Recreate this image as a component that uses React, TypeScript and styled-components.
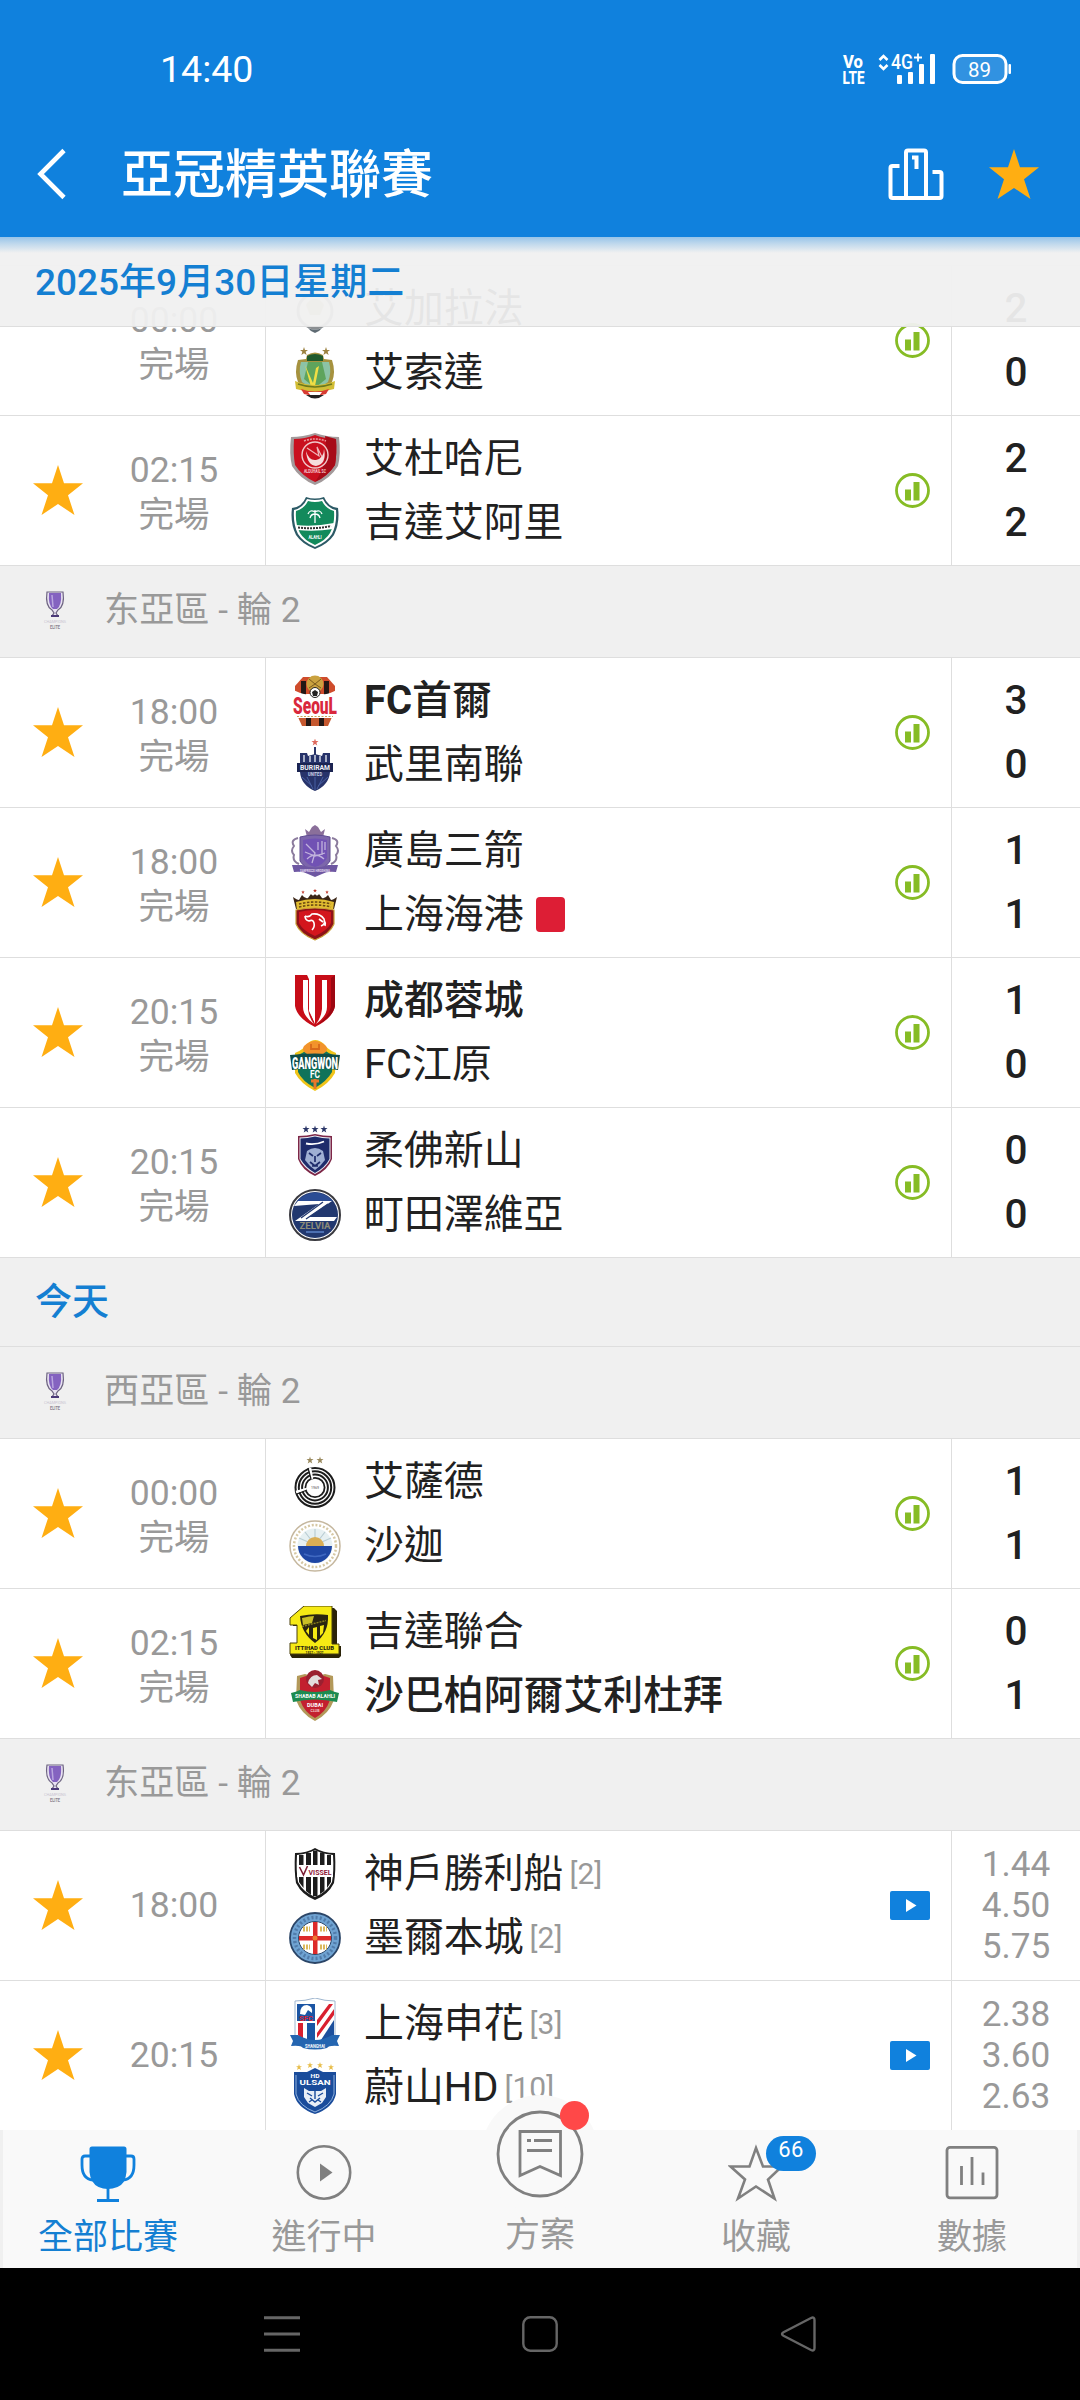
import React from "react";
import styled, { createGlobalStyle } from "styled-components";

type CrestName =
  | "gharafa"
  | "shorta"
  | "duhail"
  | "ahliSaudi"
  | "seoul"
  | "buriram"
  | "hiroshima"
  | "port"
  | "chengdu"
  | "gangwon"
  | "johor"
  | "machida"
  | "sadd"
  | "sharjah"
  | "ittihad"
  | "shabab"
  | "vissel"
  | "melbourne"
  | "shenhua"
  | "ulsan";

interface Team {
  name: string;
  crest: CrestName;
  winner?: boolean;
  rank?: number;
  redCard?: boolean;
}

interface Match {
  time: string;
  status?: string;
  favourite?: boolean;
  home: Team;
  away: Team;
  score?: [number, number];
  odds?: string[];
}

const colors = {
  primary: "#1081dd",
  dateText: "#147fd2",
  text: "#212121",
  muted: "#999999",
  line: "#dedede",
  header: "#f0f0f0",
  nav: "#f9f9f9",
  star: "#ffae12",
  green: "#86bc25",
  icon: "#808080",
};

const GlobalStyle = createGlobalStyle`
  * {
    box-sizing: border-box;
  }

  body {
    margin: 0;
    background: #fff;
    font-family: Roboto, "Noto Sans CJK TC", sans-serif;
    color: ${colors.text};
  }

  svg {
    display: block;
    flex-shrink: 0;
  }
`;

const Screen = styled.div`
  width: 1080px;
  height: 2400px;
  display: flex;
  flex-direction: column;
  overflow: hidden;
`;

const TopArea = styled.header`
  height: 237px;
  flex-shrink: 0;
  background: ${colors.primary};
  color: #fff;
`;

const StatusBar = styled.div`
  height: 137px;
  padding: 0 66px 0 160px;
  display: flex;
  align-items: center;
  justify-content: space-between;
  font-size: 37.5px;
`;

const TitleBar = styled.div`
  height: 74px;
  padding: 0 41px 0 36px;
  display: flex;
  align-items: center;
`;

const Title = styled.h1`
  flex: 1;
  margin: 0 0 0 53px;
  padding-top: 4px;
  font-size: 52px;
  line-height: 74px;
  font-weight: 500;
`;

const TitleActions = styled.div`
  display: flex;
  align-items: center;
  gap: 45px;
`;

const ListArea = styled.main`
  position: relative;
  flex: 1;
  min-height: 0;
  overflow: hidden;
`;

const StickyDate = styled.div`
  position: absolute;
  top: 0;
  left: 0;
  right: 0;
  height: 90px;
  padding-left: 35px;
  border-bottom: 1px solid ${colors.line};
  background: linear-gradient(
      rgba(16, 129, 221, 0.4),
      rgba(16, 129, 221, 0.24) 6px,
      rgba(16, 129, 221, 0) 16px
    ),
    rgba(240, 240, 240, 0.95);
  font-size: 37px;
  line-height: 91px;
  font-weight: 500;
  color: ${colors.dateText};
`;

const DateHeader = styled.div`
  height: 89px;
  padding-left: 35px;
  border-bottom: 1px solid ${colors.line};
  background: ${colors.header};
  font-size: 37px;
  line-height: 90px;
  font-weight: 500;
  color: ${colors.dateText};
`;

const LeagueHeader = styled.div<{ $height?: number }>`
  height: ${(props) => props.$height ?? 92}px;
  padding: 0 0 4px 35px;
  display: flex;
  align-items: center;
  gap: 29px;
  border-bottom: 1px solid ${colors.line};
  background: ${colors.header};
  font-size: 35.2px;
  line-height: 50px;
  color: ${colors.muted};
`;

const MatchRow = styled.div`
  height: 150px;
  display: grid;
  grid-template-columns: 265px 1fr 128px;
  border-bottom: 1px solid ${colors.line};
  background: #fff;
`;

const InfoCell = styled.div`
  display: grid;
  grid-template-columns: 50px 1fr;
  align-items: center;
  padding: 0 0 2px 33px;
`;

const TimeBlock = styled.div<{ $finished: boolean }>`
  display: flex;
  flex-direction: column;
  align-items: center;
  padding-top: ${(props) => (props.$finished ? 7 : 2)}px;
  font-size: 35.5px;
  line-height: 45px;
  color: ${colors.muted};
`;

const TeamsCell = styled.div`
  display: flex;
  align-items: center;
  padding: 0 21px 0 23px;
  border-left: 1px solid ${colors.line};
  border-right: 1px solid ${colors.line};
`;

const Teams = styled.div`
  flex: 1;
  display: flex;
  flex-direction: column;
  gap: 12px;
`;

const TeamLine = styled.div`
  height: 52px;
  display: flex;
  align-items: center;
`;

const TeamName = styled.span<{ $winner?: boolean }>`
  margin-left: 23px;
  padding-top: 1px;
  font-size: 39.9px;
  line-height: 52px;
  font-weight: ${(props) => (props.$winner ? 500 : 400)};
  white-space: nowrap;

  b {
    font-weight: ${(props) => (props.$winner ? 700 : 400)};
  }
`;

const Rank = styled.span`
  margin-left: 6px;
  font-size: 30px;
  color: ${colors.muted};
`;

const RedCard = styled.i`
  width: 29px;
  height: 35px;
  margin-left: 12px;
  border-radius: 4px;
  background: #dd1e35;
`;

const ResultCell = styled.div`
  display: flex;
  flex-direction: column;
  align-items: center;
  justify-content: center;
`;

const Score = styled.span`
  margin-top: -1px;
  font-size: 40.5px;
  line-height: 65px;
  font-weight: 500;
`;

const Odd = styled.span`
  font-size: 35.2px;
  line-height: 41px;
  color: ${colors.muted};
`;

const BottomNav = styled.nav`
  position: relative;
  height: 138px;
  flex-shrink: 0;
  display: grid;
  grid-template-columns: repeat(5, 1fr);
  box-shadow: inset 3px 0 #f0f0f0, inset -3px 0 #f0f0f0;
  background: ${colors.nav};
`;

const NavItem = styled.div<{ $active?: boolean }>`
  position: relative;
  display: flex;
  flex-direction: column;
  align-items: center;
  padding-top: 14px;
  font-size: 35px;
  line-height: 50px;
  color: ${(props) => (props.$active ? "#147fd2" : colors.muted)};

  svg {
    margin-bottom: 11px;
  }
`;

/* The plan button sticks out above the bar, only its label is in flow */
const PlanItem = styled(NavItem)`
  padding-top: 81px;
`;

const PlanButton = styled.div`
  position: absolute;
  top: -35px;
  left: 50%;
  width: 118px;
  height: 118px;
  margin-left: -59px;
  border-radius: 50%;
  background: ${colors.nav};
`;

const RedDot = styled.i`
  position: absolute;
  top: 6px;
  left: 79px;
  width: 29px;
  height: 29px;
  border-radius: 50%;
  background: #ff4848;
`;

const Badge = styled.span`
  position: absolute;
  top: 6px;
  left: 118px;
  width: 50px;
  height: 35px;
  border-radius: 18px;
  background: ${colors.primary};
  font-size: 22px;
  line-height: 27px;
  letter-spacing: 0.5px;
  text-align: center;
  color: #fff;
`;

const SystemBar = styled.div`
  height: 132px;
  flex-shrink: 0;
  display: flex;
  align-items: center;
  justify-content: center;
  gap: 222px;
  background: #000;
`;

const STAR_POINTS =
  "25,0 31,18.2 50,18.2 35,30.2 41.5,50 25,39 8.5,50 15,30.2 0,18.2 19,18.2";

const FavStar = () => (
  <svg width="50" height="50" viewBox="0 0 50 50">
    <polygon points={STAR_POINTS} fill={colors.star} />
  </svg>
);

const MiniStar = ({ x, y, s = 6, c = "#a08a50" }: {
  x: number;
  y: number;
  s?: number;
  c?: string;
}) => (
  <polygon
    points={STAR_POINTS}
    fill={c}
    transform={`translate(${x - s / 2} ${y - s / 2}) scale(${s / 50})`}
  />
);

const label = (
  text: string,
  x: number,
  y: number,
  size: number,
  fill: string,
  width?: number,
  weight = 700
) => (
  <text
    x={x}
    y={y}
    fontSize={size}
    fill={fill}
    fontWeight={weight}
    textAnchor="middle"
    textLength={width}
    lengthAdjust="spacingAndGlyphs"
    fontFamily="Roboto, sans-serif"
  >
    {text}
  </text>
);

const crests: Record<CrestName, React.ReactNode> = {
  gharafa: (
    <>
      <circle cx="26" cy="28" r="17" fill="#f4efdf" stroke="#8b8f92" strokeWidth="3" />
      <path d="M17 22c4-8 14-8 18 0l-4 10H21z" fill="#c9b98a" />
      <path d="M19 45q7 3 14 0l-3 3-4 2-4-2z" fill="#5f6b73" />
    </>
  ),
  shorta: (
    <>
      <MiniStar x={15} y={4} s={8} c="#9c8240" />
      <MiniStar x={37} y={4} s={8} c="#9c8240" />
      <path d="M18 8q8-5 16 0l1 4 8 1q4 12 0 22l-8 10q-9 7-18 0L9 35q-4-10 0-22l8-1z" fill="#a6923f" />
      <path d="M18 9q8-4 16 0v5H18z" fill="#1f5a2c" />
      <path d="M12 15h28q3 10-1 20l-13 9-13-9q-4-10-1-20z" fill="#8cc3a6" />
      <path d="M19 15h14l4 17-11 9-11-9z" fill="#5ea45c" />
      <path d="M16 18l8 18 3-15 3-2-4 20-4 1z" fill="#f0de45" />
      <path d="M6 34q20 8 40 0l-1 8q-19 6-38 0z" fill="#d2bd35" />
      <path d="M9 37q17 6 34 0" stroke="#6c7a1d" strokeWidth="1.6" fill="none" />
      <path d="M12 42q14 5 28 0l-3 5q-11 3-22 0z" fill="#d83b32" />
      <path d="M19 45h14l-3 4h-8z" fill="#fff" />
      <path d="M17 48h18q-9 7-18 0z" fill="#222" />
    </>
  ),
  duhail: (
    <>
      <path d="M2 4q12 0 24-4 12 4 24 4 2 17-1 29-8 13-23 19Q11 46 3 33 0 21 2 4z" fill="#a39a9b" />
      <path d="M5 6q11 0 21-4 10 4 21 4 1 15-1 26-7 11-20 17Q13 43 6 32 4 21 5 6z" fill="#c9101f" />
      <path d="M36 3l11 3q1 15-1 26-7 11-20 17 14-19 10-46z" fill="#a70b18" />
      <circle cx="26" cy="22" r="13" fill="none" stroke="#f1c9cb" strokeWidth="1.4" />
      <path d="M17 18q3 10 10 9 8-2 8-11 3 15-8 17-9-1-10-15z" fill="#f5dcdc" />
      <path d="M18 15l12 8-2-9 5 10" stroke="#f0b7ba" strokeWidth="1.2" fill="none" />
      <path d="M15 8q11-4 22 0" stroke="#e8969c" strokeWidth="1.6" fill="none" strokeDasharray="2 1" />
      {label("ALDUHAIL SC", 26, 40, 5, "#f5cdd0", 22)}
    </>
  ),
  ahliSaudi: (
    <>
      <path d="M17 0q9 3 18 0 4 10 14 11 2 15-4 27-6 9-19 14Q13 47 7 38 1 26 3 11 13 10 17 0z" fill="#2c5a66" />
      <path d="M18 2q8 2 16 0 4 9 13 11 1 14-4 24-5 8-17 13Q14 45 9 37 4 27 5 13q9-2 13-11z" fill="#fff" />
      <path d="M19 4q7 2 14 0 4 8 12 10 1 13-4 22-4 7-15 12-11-5-15-12-5-9-4-22 8-2 12-10z" fill="#128a5c" />
      <path d="M26 13v13M26 15q-5-3-7 2M26 15q5-3 7 2M26 17q-4 0-5 4M26 17q4 0 5 4" stroke="#fff" strokeWidth="1.3" fill="none" />
      <path d="M7 28q18 2 38-2l-1 6q-18 3-36 1z" fill="#fff" />
      <path d="M9 30.500q17 2 33-1.500" stroke="#333" strokeWidth="2" strokeDasharray="2 1" fill="none" />
      {label("ALAHLI", 26, 42, 6, "#fff", 13)}
    </>
  ),
  seoul: (
    <>
      <path d="M14 2h24l8 9v10H6V11z" fill="#cf4c2c" />
      <path d="M12 6h5v14h-5zM35 6h5v14h-5z" fill="#231815" />
      <circle cx="26" cy="9" r="8.500" fill="#caa23f" />
      <path d="M20 4l6 5 6-5M20 13l6-4 6 4" stroke="#7a5a1c" fill="none" />
      <path d="M9 42h34l-4 9H13z" fill="#c5582f" />
      <path d="M17 43h5v8h-5zM30 43h5v8h-5z" fill="#231815" />
      <path d="M3 14q10 6 15 5h16q6 1 15-5v29H3z" fill="#fff" />
      <circle cx="26" cy="17.500" r="5" fill="#fff" stroke="#222" strokeWidth="1" />
      <path d="M26 15l3 2-1 4h-4l-1-4z" fill="#222" />
      {label("SeouL", 26, 39, 24, "#d9283c", 44, 900)}
      <path d="M8 41.500h36" stroke="#c9a458" strokeWidth="1.2" strokeDasharray="2 1.500" />
    </>
  ),
  buriram: (
    <>
      <MiniStar x={26} y={3} s={7} c="#df6a5d" />
      <path d="M26 8v9" stroke="#2a3568" strokeWidth="2" />
      <path d="M11 14h7l1 3 7-2 7 2 1-3h7v11h2v8h-2q-1 13-15 19Q12 46 11 33H9v-8h2z" fill="#27336a" />
      <path d="M15 16v7M21 17v6M26 16v7M31 17v6M37 16v7" stroke="#c9cede" strokeWidth="1.600" />
      <path d="M13 38l10 9M18 38l6 12M26 38v13M34 38l-6 12M39 38l-10 9" stroke="#4960a3" strokeWidth="1" />
      <path d="M8 24h36v9H8z" fill="#1b2452" />
      {label("BURIRAM", 26, 31, 7.500, "#eef0f7", 30)}
      {label("UNITED", 26, 37, 4.5, "#ccd3e8", 14)}
    </>
  ),
  hiroshima: (
    <>
      <path d="M16 4l4 3 3-5 3-2 3 2 3 5 4-3-2 8H18z" fill="#8a6f9a" />
      <path d="M11 12q15-4 30 0v24q-5 8-15 10-10-2-15-10z" fill="#7c66ab" stroke="#5e4b91" strokeWidth="1" />
      <path d="M14 15q12-3 24 0v18q-4 7-12 9-8-2-12-9z" fill="#7152b4" />
      <path d="M17 19l9 9-3 10M33 16v14M29 17v8M36 17v8M18 34q8-8 17 0M16 27l10 4 10-3" stroke="#c1b3dc" strokeWidth="1.3" fill="none" />
      <path d="M9 13q-8 2-4 8-4 5 0 9-2 6 5 9M43 13q8 2 4 8 4 5 0 9 2 6-5 9" stroke="#8b7b9d" strokeWidth="2" fill="none" />
      <path d="M3 40h10q13 5 26 0h10l-2 7q-9-1-14 2l-7 3-7-3q-5-3-14-2z" fill="#6e57a2" />
      {label("SANFRECCE HIROSHIMA", 26, 46.500, 4, "#e6def1", 30)}
    </>
  ),
  port: (
    <>
      <path d="M4 8q4 3 6 3l3-5q3 4 6 3l3-4q2 3 4 0 2 3 4 0l3 4q3 1 6-3l3 5q2 0 6-3l-3 12H7z" fill="#3a2415" />
      <MiniStar x={26} y={1.500} s={4} c="#c0392b" />
      <MiniStar x={14} y={3} s={3.500} c="#c0392b" />
      <MiniStar x={38} y={3} s={3.500} c="#c0392b" />
      <path d="M7 13q19-6 38 0l-1 9H8z" fill="#e2bd31" />
      <path d="M10 15q16-4 32 0M10 18q16-4 32 0" stroke="#6b4a12" strokeWidth="1.600" strokeDasharray="2.500 1.500" fill="none" />
      <path d="M7 21q19-4 38 0v14q-4 10-19 16Q11 45 7 35z" fill="#8e1219" stroke="#c9a13a" strokeWidth="1.200" />
      <path d="M10 23q16-4 32 0v11q-4 8-16 13-12-5-16-13z" fill="#d3151d" />
      <path d="M16 27q4 2 7-2 8-1 12 5 2 5-3 7M16 27q0 4 4 5 4-2 5 2 1 4-2 7M30 30l4 3M35 31q2 3 1 6" stroke="#fff" strokeWidth="1.600" fill="none" />
    </>
  ),
  chengdu: (
    <>
      <path d="M6 0h12l2 4v32l6 12V0h20v31q-2 12-20 21Q8 43 6 31z" fill="#c70d18" />
      <path d="M14 5h5v29q1 9 6 15-11-8-11-17zM33 5h5v27q0 9-11 17 5-6 6-15z" fill="#fff" />
      <path d="M19 0h2v36l5 13V38L20 4z" fill="#fff" />
      <path d="M42 3v29q-2 9-14 18 16-8 18-19V0z" fill="#9d0712" />
    </>
  ),
  gangwon: (
    <>
      <path d="M6 14q8-3 12-9 8-8 17 0 4 6 12 9l-1 20q-6 11-20 18Q12 45 6 34z" fill="#f0c419" />
      <path d="M9 16q8-3 12-9h11q4 6 12 9l-1 17q-5 9-17 16Q13 42 9 33z" fill="#10735a" />
      <path d="M15 7q11-10 22 0 3 5-3 8H18q-6-3-3-8z" fill="#f2932c" />
      <path d="M22 5v5h8V5" stroke="#d8691a" strokeWidth="1.800" fill="none" />
      <path d="M1 16q25-3 50 0l-2 15q-23-4-46 0z" fill="#0f4d49" />
      {label("GANGWON", 26, 30, 16.500, "#fff", 46, 900)}
      {label("FC", 26, 38.500, 10, "#fff", 10)}
      <path d="M26 40v10M22 42h8" stroke="#e9772a" strokeWidth="3" />
    </>
  ),
  johor: (
    <>
      <MiniStar x={17} y={4} s={7} c="#2a3567" />
      <MiniStar x={26} y={4} s={7} c="#2a3567" />
      <MiniStar x={35} y={4} s={7} c="#2a3567" />
      <path d="M9 11q9 0 17-2 8 2 17 2v23q-4 11-17 17Q13 45 9 34z" fill="#7d2747" />
      <path d="M10.500 12.500q8 0 15.500-2 7.500 2 15.500 2V34q-4 9-15.500 15Q14.500 43 10.500 34z" fill="#e9ebf3" />
      <path d="M11.500 13.500q7 0 14.500-2 7 2 14.500 2V34q-4 8-14.500 14-10-6-14.500-14z" fill="#1e2c6b" />
      <path d="M17 18.500q9 2 18-2" stroke="#fff" strokeWidth="1.800" fill="none" />
      <path d="M18 26q8-6 16 0l2 9-5 6-5 4-5-4-5-6z" fill="#9fafd3" />
      <path d="M20 28l4 3M32 28l-4 3M26 31v6M21 37l5 4 5-4M23 41h6" stroke="#1e2c6b" strokeWidth="1.700" fill="none" />
    </>
  ),
  machida: (
    <>
      <circle cx="26" cy="26" r="25" fill="#fff" stroke="#3a3a40" strokeWidth="2" />
      <circle cx="26" cy="26" r="23" fill="#22386f" />
      <path d="M8 12q8-8 18-8.500 11 .5 18 8.500z" fill="#2b4c94" />
      <path d="M5 17l4-5h34l-23 16h28l-3 4H6l24-17z" fill="#fff" />
      <path d="M12 29l22-16M17 30l22-15" stroke="#22386f" strokeWidth="1.300" />
      {label("ZELVIA", 26, 40, 9, "#8d8b78", 31)}
      <path d="M17 43h18" stroke="#5c83c8" strokeWidth="1.500" />
    </>
  ),
  sadd: (
    <>
      <MiniStar x={21} y={4} s={7} c="#9a8a5e" />
      <MiniStar x={31} y={4} s={7} c="#9a8a5e" />
      <g fill="none" stroke="#1c1c1c">
        <circle cx="26" cy="31.500" r="19.500" strokeWidth="2" />
        <circle cx="26" cy="31.500" r="16.200" strokeWidth="2" />
        <circle cx="26" cy="31.500" r="12.900" strokeWidth="2" />
        <circle cx="26" cy="31.500" r="9.600" strokeWidth="1.800" />
      </g>
      <path d="M21 12l2 11M7 36l11-3" stroke="#fff" strokeWidth="2.500" />
      <path d="M19 12l3 11M8 38l10-4" stroke="#1c1c1c" strokeWidth="1.300" />
      {label("1969", 26, 33, 4, "#8a8a8a", 8)}
    </>
  ),
  sharjah: (
    <>
      <circle cx="26" cy="26" r="25" fill="#fff" stroke="#c5b79e" strokeWidth="1.500" />
      <circle cx="26" cy="26" r="21" fill="none" stroke="#d6c8a4" strokeWidth="2.500" strokeDasharray="2 1.800" />
      <circle cx="26" cy="26" r="17.500" fill="#e6f0f2" />
      <path d="M26 25V9M26 25L16 12M26 25l10-13M26 25L10 18M26 25l16-7" stroke="#b9cdd3" strokeWidth="1.200" />
      <path d="M17 26a9 9 0 0118 0z" fill="#d9ae55" />
      <path d="M9 26h34a17 17 0 01-34 0z" fill="#1f47a4" />
      <path d="M15 34q11 5 22 0" stroke="#3f68c0" strokeWidth="1.500" fill="none" />
    </>
  ),
  ittihad: (
    <>
      <path d="M4 14L17 2h28l3 3v35h4v10l-2 2H3l-2-3V38h7V20H4z" fill="#2b2308" />
      <path d="M1 12L15 0h28v38h7v10H1V37h7V19H1z" fill="#f6ea14" stroke="#4a400c" strokeWidth="1" />
      <path d="M11 10q14-3 28-1 1 18-13 28Q12 27 11 10z" fill="#2a2510" />
      <path d="M13 12q8-2 12-2l-2 7-9 2z" fill="#c9bf26" />
      <path d="M17 25l3 4v-8zM24 22l4-1v13l-4-2zM31 20l4-1-1 8-3 3z" fill="#f6ea14" />
      <path d="M13 20.500l24-6" stroke="#8a811d" strokeWidth="1.500" strokeDasharray="2 1" />
      {label("ITTIHAD CLUB", 25.500, 44, 5.500, "#2a2510", 39, 900)}
      {label("1927 - 1927", 25.500, 47.500, 3, "#2a2510", 18)}
    </>
  ),
  shabab: (
    <>
      <path d="M8 6l8-2 10 3 10-3 8 2 1 24q-5 14-19 21Q12 44 7 30z" fill="#b3995a" />
      <path d="M11 8l6-2 9 3 9-3 6 2v22q-4 12-15 18-11-6-15-18z" fill="#c3202f" />
      <circle cx="26" cy="9" r="9" fill="#9a2030" />
      <path d="M19 13q2-8 9-8l5 4-4 1 1 5-4-2-3 4z" fill="#e2dcdc" />
      <path d="M2 23q5-1 9-3 15 4 30 0 4 2 9 3l-2 9q-22-5-44 0z" fill="#1d8b50" />
      {label("SHABAB ALAHLI", 26, 28, 5.500, "#fff", 40)}
      {label("DUBAI", 26, 37, 6, "#fff", 16)}
      {label("CLUB", 26, 42, 4, "#f2c9cc", 9)}
    </>
  ),
  vissel: (
    <>
      <path d="M6 5q12 0 20-5 8 5 20 5 1 18-1 30-6 12-19 17Q13 47 7 35 5 23 6 5z" fill="#1c1c1c" />
      <path d="M8 7q11-1 18-5 7 4 18 5 1 16-1 27-5 10-17 15Q14 44 9 34 7 23 8 7z" fill="#fff" />
      <path d="M10 7h4.500v33L10 34zM17 5h5v42l-5-4zM24 2.500h4.500v46L24 48zM31 4.500h4.500V43L31 46zM38 7h4v27l-4 6z" fill="#1c1c1c" />
      <path d="M8 17h36v12H8z" fill="#fff" />
      <path d="M10.500 19l4 8 4-9" stroke="#7b1f35" strokeWidth="1.600" fill="none" />
      {label("VISSEL", 31, 26.500, 7.500, "#8f2038", 23)}
    </>
  ),
  melbourne: (
    <>
      <circle cx="26" cy="26" r="25" fill="#6fa3d2" stroke="#2b4567" strokeWidth="1.800" />
      <circle cx="26" cy="26" r="20.500" fill="none" stroke="#517cab" strokeWidth="3.500" strokeDasharray="2 2.200" />
      <circle cx="26" cy="26" r="16.500" fill="#fff" stroke="#2b4567" strokeWidth="1" />
      <path d="M14 17h7M31 17h7M14 35h7M31 35h7" stroke="#dcb95c" strokeWidth="5" strokeDasharray="2 1" />
      <path d="M24 10h4.500v32H24zM10 24h32v4.500H10z" fill="#dd2a2a" />
      <circle cx="26" cy="26" r="2.500" fill="#ee7c33" />
    </>
  ),
  shenhua: (
    <>
      <path d="M6 3q10 0 20-3 10 3 20 3v34q-6 7-20 10Q12 44 6 37z" fill="#fff" stroke="#9fb6cf" strokeWidth="1" />
      <path d="M8 6h18v17H8z" fill="#1b55a4" />
      <path d="M11 16q0-9 7-9 6 1 5 8l-4-3-3 5z" fill="#fff" />
      {label("SFC", 17, 23, 7, "#de1f2f", 14)}
      <path d="M28 22l12-16h4L28 28zM28 35l17-24v6L28 40z" fill="#d9202f" />
      <path d="M9 25h5v17l-5-5z" fill="#d9202f" />
      <path d="M18 25h8v21l-8-3z" fill="#1b55a4" />
      <path d="M45 22v15l-15 8z" fill="#1c4f9c" />
      <path d="M1 37h8q17 10 34 0h8l-3 6 2 5q-10-1-12 2-12 3-24 0-2-3-12-2l2-5z" fill="#2465b0" />
      {label("SHANGHAI", 26, 49.500, 5, "#fff", 20)}
    </>
  ),
  ulsan: (
    <>
      <MiniStar x={10} y={5} s={6} c="#e7bd4b" />
      <MiniStar x={21} y={3} s={6} c="#e7bd4b" />
      <MiniStar x={31} y={3} s={6} c="#e7bd4b" />
      <MiniStar x={42} y={5} s={6} c="#e7bd4b" />
      <path d="M5 10h13l8-4 8 4h13v22q-3 14-21 20Q8 46 5 32z" fill="#1a4c9b" />
      <path d="M7 13v19q3 12 19 18 16-6 19-18V13" stroke="#8fb1dd" strokeWidth="1" fill="none" />
      {label("HD", 26, 16, 6, "#fff", 9)}
      {label("ULSAN", 26, 23, 7.500, "#fff", 31)}
      <path d="M15 26l5 3h12l5-3v9l-4 6-7 4-7-4-4-6z" fill="#e8eef6" />
      <path d="M18 31l5 3M34 31l-5 3M26 29v8M21 36l5 4 5-4M20 40l3-2M32 40l-3-2" stroke="#1a4c9b" strokeWidth="1.400" fill="none" />
    </>
  ),
};

const Crest = ({ name }: { name: CrestName }) => (
  <svg width="52" height="52" viewBox="0 0 52 52">
    {crests[name]}
  </svg>
);

const CupLogo = () => (
  <svg width="40" height="40" viewBox="0 0 40 40">
    <path d="M12 2h16q2 14-5 18l-2 3 2 3h-6l2-3-2-3Q10 16 12 2z" fill="#e8e2f2" stroke="#6d6480" strokeWidth="1.200" />
    <path d="M14 3h12q1 12-4 16h-4q-5-4-4-16z" fill="#8463c0" />
    <path d="M17 5l1 12" stroke="#b9a6df" strokeWidth="1.500" />
    <path d="M16 25h8v2h-8z" fill="#4b3a78" />
    {label("CHAMPIONS", 20, 33, 4, "#c9c4d0", 22, 400)}
    {label("ELITE", 20, 39, 4.500, "#8a8490", 10)}
  </svg>
);

const StatsIcon = () => (
  <svg width="35" height="35" viewBox="0 0 35 35">
    <circle cx="17.500" cy="17.500" r="16" fill="none" stroke={colors.green} strokeWidth="2.800" />
    <path d="M10 16.500h6v11h-6zM18.500 9h6v18.500h-6z" fill={colors.green} />
  </svg>
);

const VideoIcon = () => (
  <svg width="40" height="29" viewBox="0 0 40 29">
    <rect width="40" height="29" rx="2" fill={colors.primary} />
    <path d="M16 8l10.500 6.500L16 21z" fill="#fff" />
  </svg>
);

const StatusIcons = () => (
  <svg width="178" height="40" viewBox="836 49 178 40" fill="#fff">
    {label("Vo", 853, 67.800, 18, "#fff", 20, 800)}
    {label("LTE", 853.500, 84, 18.500, "#fff", 22, 800)}
    <path d="M879.500 60l4-4 4 4M879.500 65l4 4 4-4" fill="none" stroke="#fff" strokeWidth="2.600" />
    {label("4G", 902, 69, 20.500, "#fff", 22, 500)}
    <path d="M918 53.500v8M914 57.500h8" stroke="#fff" strokeWidth="1.800" />
    <rect x="897" y="75" width="5" height="9" rx="1" />
    <rect x="908" y="72" width="5" height="12" rx="1" />
    <rect x="919" y="64" width="5" height="20" rx="1" />
    <rect x="930" y="54" width="5" height="30" rx="1" />
    <rect x="954" y="55.500" width="52" height="27" rx="8.500" fill="rgba(255,255,255,.14)" stroke="#fff" strokeWidth="3" />
    <rect x="1008.500" y="64" width="2.500" height="10" rx="1" />
    {label("89", 979.500, 76.500, 21, "#fff", 23, 400)}
  </svg>
);

const BackIcon = () => (
  <svg width="32" height="52" viewBox="0 0 32 52">
    <path d="M28 2.500L4.500 26l23.500 23.500" fill="none" stroke="#fff" strokeWidth="4.600" />
  </svg>
);

const PodiumIcon = () => (
  <svg width="56" height="52" viewBox="0 0 56 52" fill="none" stroke="#fff" strokeWidth="4">
    <path d="M11.500 18H4.500q-2 0-2 2v28q0 2 2 2h47q2 0 2-2V26q0-2-2-2h-7" />
    <path d="M18 50V4.500q0-2 2-2h16q2 0 2 2V50" />
    <path d="M24 9.500h4.500V21" />
  </svg>
);

const TrophyIcon = () => (
  <svg width="56" height="58" viewBox="0 0 56 58" fill="none" stroke={colors.primary} strokeWidth="2.800">
    <path d="M9.500 5Q9.500 2.400 12 2.400h32q2.500 0 2.500 2.600v23q-1 12-9 15-10 4-19 0-8-4-9-15z" fill={colors.primary} stroke="none" />
    <path d="M10 12H5q-3 0-3 3v6q0 14 11 15M46 12h5q3 0 3 3v6q0 14-11 15" />
    <path d="M28 44v12M17 56.500h22" />
  </svg>
);

const LiveIcon = () => (
  <svg width="56" height="58" viewBox="0 0 56 58">
    <circle cx="28" cy="28.500" r="26.200" fill="none" stroke={colors.icon} strokeWidth="2.600" />
    <path d="M24 19.500l12.500 9-12.500 9z" fill={colors.icon} />
  </svg>
);

const PlanIcon = () => (
  <svg width="118" height="118" viewBox="0 0 118 118" fill="none" stroke={colors.icon} strokeWidth="2.800">
    <circle cx="59" cy="59" r="42" />
    <path d="M39 36.500h40.500v44L59 71.500l-20 9z" />
    <path d="M46 45.500h4M53 45.500h18M46 55.500h25" />
  </svg>
);

const StarOutlineIcon = () => (
  <svg width="56" height="58" viewBox="0 0 56 58">
    <path d="M28 4l7 18.500h18.800L40 35.500 46.500 54.500 28 42.500 10 54.500 17 35.500 2.500 22.500h19z" fill="none" stroke={colors.icon} strokeWidth="2.600" />
  </svg>
);

const DataIcon = () => (
  <svg width="56" height="58" viewBox="0 0 56 58" fill="none" stroke={colors.icon} strokeWidth="2.800">
    <rect x="3" y="3.300" width="50" height="50.500" rx="3" />
    <path d="M17.500 22v19M28 13v28M39 28.500v12.500" />
  </svg>
);

const TeamRow = ({ team }: { team: Team }) => (
  <TeamLine>
    <Crest name={team.crest} />
    <TeamName $winner={team.winner}>
      {team.name
        .split(/([A-Z]+)/)
        .map((part, i) => (/[A-Z]/.test(part) ? <b key={i}>{part}</b> : part))}
    </TeamName>
    {team.rank && <Rank>[{team.rank}]</Rank>}
    {team.redCard && <RedCard />}
  </TeamLine>
);

const MatchItem = ({ match }: { match: Match }) => (
  <MatchRow>
    <InfoCell>
      {match.favourite === false ? <span /> : <FavStar />}
      <TimeBlock $finished={!!match.status}>
        <span>{match.time}</span>
        {match.status && <span>{match.status}</span>}
      </TimeBlock>
    </InfoCell>
    <TeamsCell>
      <Teams>
        <TeamRow team={match.home} />
        <TeamRow team={match.away} />
      </Teams>
      {match.odds ? <VideoIcon /> : <StatsIcon />}
    </TeamsCell>
    <ResultCell>
      {match.score?.map((goals, i) => (
        <Score key={i}>{goals}</Score>
      ))}
      {match.odds?.map((odd) => (
        <Odd key={odd}>{odd}</Odd>
      ))}
    </ResultCell>
  </MatchRow>
);

const MatchList = ({ matches }: { matches: Match[] }) => (
  <>
    {matches.map((match) => (
      <MatchItem key={match.home.crest} match={match} />
    ))}
  </>
);

const yesterdayWest: Match[] = [
  {
    time: "00:00",
    status: "完場",
    favourite: false,
    home: { name: "艾加拉法", crest: "gharafa" },
    away: { name: "艾索達", crest: "shorta" },
    score: [2, 0],
  },
  {
    time: "02:15",
    status: "完場",
    home: { name: "艾杜哈尼", crest: "duhail" },
    away: { name: "吉達艾阿里", crest: "ahliSaudi" },
    score: [2, 2],
  },
];

const yesterdayEast: Match[] = [
  {
    time: "18:00",
    status: "完場",
    home: { name: "FC首爾", crest: "seoul", winner: true },
    away: { name: "武里南聯", crest: "buriram" },
    score: [3, 0],
  },
  {
    time: "18:00",
    status: "完場",
    home: { name: "廣島三箭", crest: "hiroshima" },
    away: { name: "上海海港", crest: "port", redCard: true },
    score: [1, 1],
  },
  {
    time: "20:15",
    status: "完場",
    home: { name: "成都蓉城", crest: "chengdu", winner: true },
    away: { name: "FC江原", crest: "gangwon" },
    score: [1, 0],
  },
  {
    time: "20:15",
    status: "完場",
    home: { name: "柔佛新山", crest: "johor" },
    away: { name: "町田澤維亞", crest: "machida" },
    score: [0, 0],
  },
];

const todayWest: Match[] = [
  {
    time: "00:00",
    status: "完場",
    home: { name: "艾薩德", crest: "sadd" },
    away: { name: "沙迦", crest: "sharjah" },
    score: [1, 1],
  },
  {
    time: "02:15",
    status: "完場",
    home: { name: "吉達聯合", crest: "ittihad" },
    away: { name: "沙巴柏阿爾艾利杜拜", crest: "shabab", winner: true },
    score: [0, 1],
  },
];

const todayEast: Match[] = [
  {
    time: "18:00",
    home: { name: "神戶勝利船", crest: "vissel", rank: 2 },
    away: { name: "墨爾本城", crest: "melbourne", rank: 2 },
    odds: ["1.44", "4.50", "5.75"],
  },
  {
    time: "20:15",
    home: { name: "上海申花", crest: "shenhua", rank: 3 },
    away: { name: "蔚山HD", crest: "ulsan", rank: 10 },
    odds: ["2.38", "3.60", "2.63"],
  },
];

export default function App() {
  return (
    <>
      <GlobalStyle />
      <Screen>
        <TopArea>
          <StatusBar>
            <span>14:40</span>
            <StatusIcons />
          </StatusBar>
          <TitleBar>
            <BackIcon />
            <Title>亞冠精英聯賽</Title>
            <TitleActions>
              <PodiumIcon />
              <FavStar />
            </TitleActions>
          </TitleBar>
        </TopArea>

        <ListArea>
          <LeagueHeader $height={29} />
          <MatchList matches={yesterdayWest} />
          <LeagueHeader>
            <CupLogo />
            东亞區 - 輪 2
          </LeagueHeader>
          <MatchList matches={yesterdayEast} />
          <DateHeader>今天</DateHeader>
          <LeagueHeader>
            <CupLogo />
            西亞區 - 輪 2
          </LeagueHeader>
          <MatchList matches={todayWest} />
          <LeagueHeader>
            <CupLogo />
            东亞區 - 輪 2
          </LeagueHeader>
          <MatchList matches={todayEast} />
          <StickyDate>2025年9月30日星期二</StickyDate>
        </ListArea>

        <BottomNav>
          <NavItem $active>
            <TrophyIcon />
            全部比賽
          </NavItem>
          <NavItem>
            <LiveIcon />
            進行中
          </NavItem>
          <PlanItem>
            <PlanButton>
              <PlanIcon />
              <RedDot />
            </PlanButton>
            方案
          </PlanItem>
          <NavItem>
            <StarOutlineIcon />
            <Badge>66</Badge>
            收藏
          </NavItem>
          <NavItem>
            <DataIcon />
            數據
          </NavItem>
        </BottomNav>

        <SystemBar>
          <svg width="36" height="36" viewBox="0 0 36 36" stroke="#666" strokeWidth="3">
            <path d="M0 1.700h36M0 18h36M0 34.300h36" />
          </svg>
          <svg width="36" height="36" viewBox="0 0 36 36" fill="none" stroke="#666" strokeWidth="2.400">
            <rect x="1.300" y="1.300" width="33.400" height="33.400" rx="7" />
          </svg>
          <svg width="36" height="36" viewBox="0 0 36 36" fill="none" stroke="#666" strokeWidth="2.400">
            <path d="M31 2Q34.500.5 34.500 4v28q0 3.500-3.500 2L3.500 19.800q-3-1.800 0-3.600z" />
          </svg>
        </SystemBar>
      </Screen>
    </>
  );
}
